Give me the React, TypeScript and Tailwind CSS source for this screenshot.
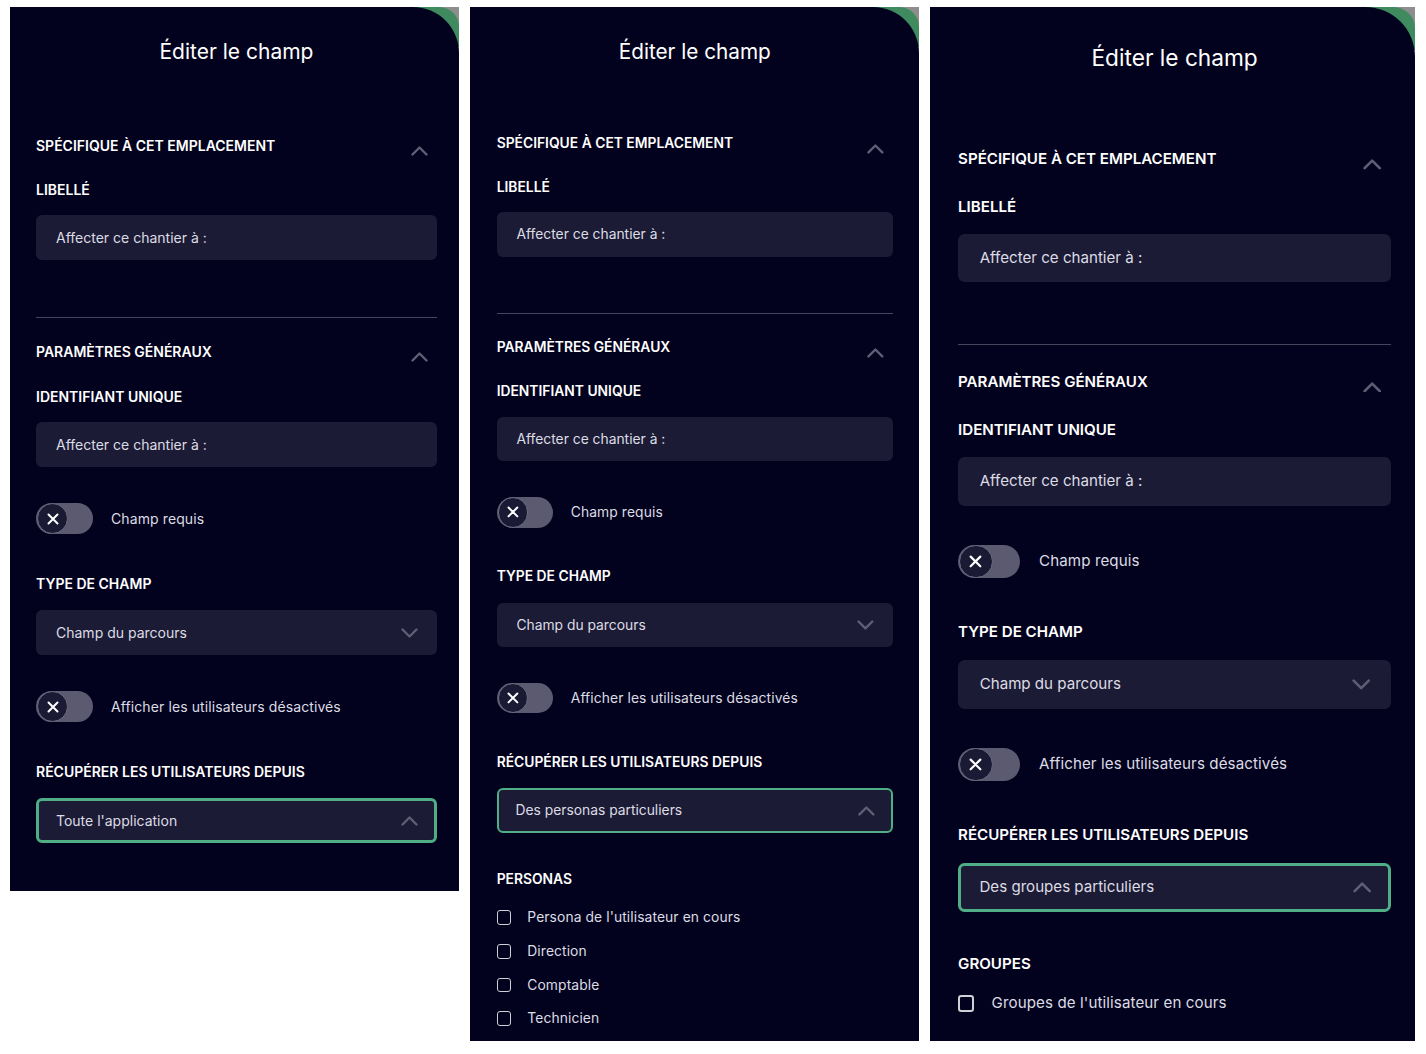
import React from 'react';

const FONT = { fontFamily: 'Inter, "Noto Sans", sans-serif' };

function Chevron({ up }: { up?: boolean }) {
  return (
    <svg width="17" height="10" viewBox="0 0 17 10" fill="none">
      <path
        d={up ? 'M1.5 8.5L8.5 1.5L15.5 8.5' : 'M1.5 1.5L8.5 8.5L15.5 1.5'}
        stroke="#5f5e75"
        strokeWidth="2.4"
        strokeLinecap="round"
        strokeLinejoin="round"
      />
    </svg>
  );
}

function SectionHeader({ title }: { title: string }) {
  return (
    <div className="flex items-start justify-between">
      <span className="text-[14px] font-semibold leading-5 text-white">{title}</span>
      <span className="mt-[10px] mr-[9px] flex">
        <Chevron up />
      </span>
    </div>
  );
}

function Label({ children, className = '' }: { children: React.ReactNode; className?: string }) {
  return <div className={`text-[14px] font-semibold leading-5 text-white ${className}`}>{children}</div>;
}

function Field({ children, className = '' }: { children: React.ReactNode; className?: string }) {
  return (
    <div className={`flex h-[45px] items-center rounded-md bg-[#1c1b36] px-5 text-[14px] text-[#dcdce4] ${className}`}>
      {children}
    </div>
  );
}

function Toggle({ label, className = '' }: { label: string; className?: string }) {
  return (
    <div className={`flex items-center gap-[18px] ${className}`}>
      <div className="flex h-[31px] w-[57px] rounded-full bg-[#5b5a70] pl-px">
        <div className="flex h-[31px] w-[31px] items-center justify-center rounded-full border border-[#6d6c82] bg-[#1b1a35]">
          <svg width="12" height="12" viewBox="0 0 12 12">
            <path d="M1.5 1.5L10.5 10.5M10.5 1.5L1.5 10.5" stroke="#fff" strokeWidth="2" strokeLinecap="round" />
          </svg>
        </div>
      </div>
      <span className="text-[14px] tracking-[0.1px] text-[#dcdce4]">{label}</span>
    </div>
  );
}

function Check({ label }: { label: string }) {
  return (
    <div className="flex h-5 items-center gap-4">
      <div className="h-[15px] w-[15px] rounded-[3px] border-2 border-[#d0d0d8]" />
      <span className="text-[14px] tracking-[0.1px] text-[#dcdce4]">{label}</span>
    </div>
  );
}

function Corner() {
  return (
    <div className="absolute right-0 top-0 h-[40px] w-[48px] bg-[#8e8e8e]">
      <div className="h-full w-full rounded-tr-[20px] bg-[#3f8a5f]" />
    </div>
  );
}

function PanelBody({ source, extra, top = 'pt-[31px]' }: { source: string; extra?: React.ReactNode; top?: string }) {
  return (
    <div className={`flex w-[401px] flex-col ${top}`}>
      <h1 className="text-center text-[21px] leading-7 text-white">Éditer le champ</h1>
      <div className="mt-[70px]">
        <SectionHeader title="SPÉCIFIQUE À CET EMPLACEMENT" />
      </div>
      <Label className="mt-6">LIBELLÉ</Label>
      <Field className="mt-[15px]">Affecter ce chantier à :</Field>
      <div className="mt-[57px] border-t border-[#46455b]" />
      <div className="mt-6">
        <SectionHeader title="PARAMÈTRES GÉNÉRAUX" />
      </div>
      <Label className="mt-[25px]">IDENTIFIANT UNIQUE</Label>
      <Field className="mt-[15px]">Affecter ce chantier à :</Field>
      <Toggle label="Champ requis" className="mt-9" />
      <Label className="mt-10">TYPE DE CHAMP</Label>
      <Field className="mt-4 justify-between pr-[19px]">
        <span>Champ du parcours</span>
        <Chevron />
      </Field>
      <Toggle label="Afficher les utilisateurs désactivés" className="mt-9" />
      <Label className="mt-10">RÉCUPÉRER LES UTILISATEURS DEPUIS</Label>
      <Field className="mt-4 justify-between border-[3px] border-[#4fae86] pl-[17px] pr-4">
        <span>{source}</span>
        <Chevron up />
      </Field>
      {extra}
    </div>
  );
}

export default function App() {
  return (
    <div className="flex min-h-screen items-start gap-[11px] bg-white pl-[10px] pt-[7px]" style={FONT}>
      <div className="relative h-[884px] w-[449px]">
        <Corner />
        <div className="relative h-full w-full rounded-tr-[46px] bg-[#03021e] pl-[26px]">
          <PanelBody source="Toute l'application" />
        </div>
      </div>

      <div className="relative h-[1034px] w-[449px]">
        <Corner />
        <div className="relative h-full w-full overflow-hidden rounded-tr-[46px] bg-[#03021e]">
          <div className="pl-[27px] [zoom:0.988]">
            <PanelBody
              source="Des personas particuliers"
              extra={
                <>
                  <Label className="mt-[38px]">PERSONAS</Label>
                  <div className="mt-[18px] flex flex-col gap-[14px]">
                    <Check label="Persona de l'utilisateur en cours" />
                    <Check label="Direction" />
                    <Check label="Comptable" />
                    <Check label="Technicien" />
                  </div>
                </>
              }
            />
          </div>
        </div>
      </div>

      <div className="relative h-[957px] w-[449px] [zoom:1.08]">
        <Corner />
        <div className="relative h-full w-full overflow-hidden rounded-tr-[46px] bg-[#03021e] pl-[26px]">
          <PanelBody
            top="pt-[33px]"
            source="Des groupes particuliers"
            extra={
              <>
                <Label className="mt-[38px]">GROUPES</Label>
                <div className="mt-[17px] flex flex-col gap-[14px]">
                  <Check label="Groupes de l'utilisateur en cours" />
                </div>
              </>
            }
          />
        </div>
      </div>
    </div>
  );
}
